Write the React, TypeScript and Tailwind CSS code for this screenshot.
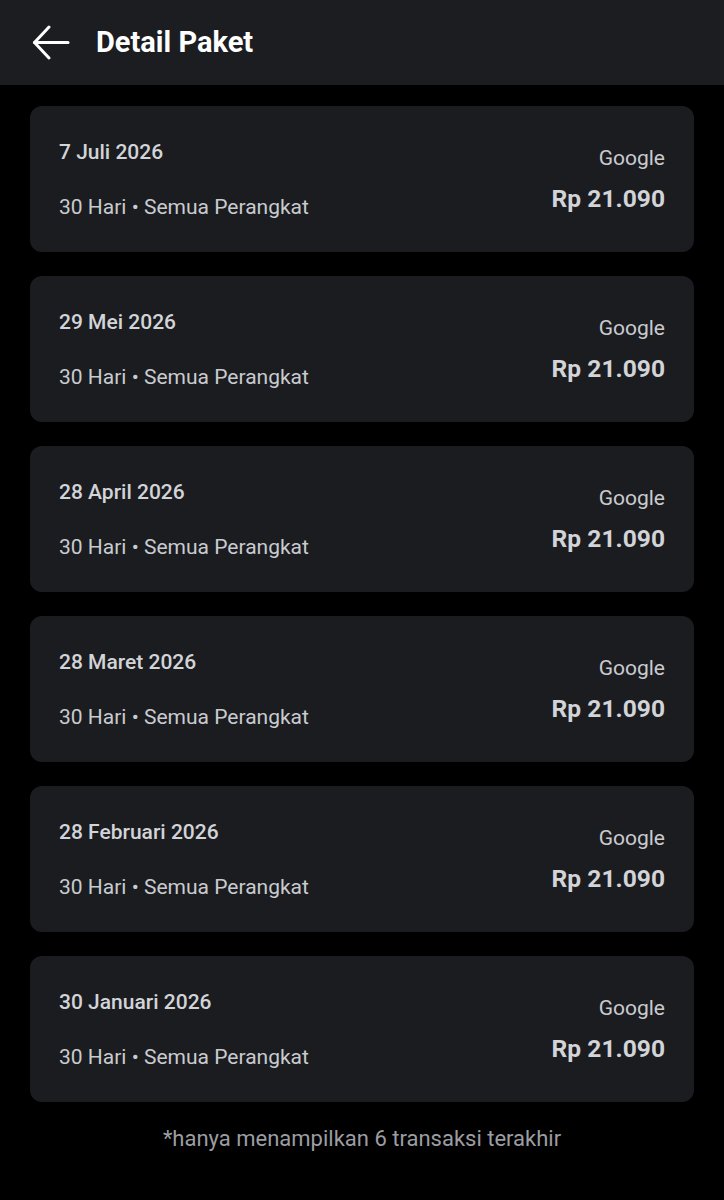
const transactions = [
  "7 Juli 2026",
  "29 Mei 2026",
  "28 April 2026",
  "28 Maret 2026",
  "28 Februari 2026",
  "30 Januari 2026",
];

function BackArrow() {
  return (
    <svg width="38" height="36" viewBox="0 0 38 36" fill="none" stroke="white" strokeWidth="3" strokeLinecap="round" strokeLinejoin="round">
      <path d="M2.5 17.5H36" />
      <path d="M17 2 2.5 17.5 17 33" />
    </svg>
  );
}

function PackageCard({ date }: { date: string }) {
  return (
    <div className="flex h-[146px] items-center justify-between rounded-xl bg-[#1b1c20] px-[29px]">
      <div className="flex flex-col gap-[31px]">
        <div className="text-[21px] font-medium leading-6 text-[#d2d4d8]">{date}</div>
        <div className="text-[21px] leading-6 text-[#c9cbcf]">30 Hari • Semua Perangkat</div>
      </div>
      <div className="flex flex-col items-end gap-[15px]">
        <div className="text-[21px] leading-6 text-[#c9cbcf]">Google</div>
        <div className="text-[24.6px] font-bold leading-7 text-[#d2d4d8]">Rp 21.090</div>
      </div>
    </div>
  );
}

export default function App() {
  return (
    <div className="min-h-[1200px] bg-black font-['Roboto',sans-serif]">
      <div className="flex h-[85px] items-center bg-[#1c1d21] pl-[32px]">
        <BackArrow />
        <div className="ml-[26px] text-[29px] font-bold text-white">Detail Paket</div>
      </div>
      <div className="flex flex-col gap-6 px-[30px] pt-[21px]">
        {transactions.map((d) => (
          <PackageCard key={d} date={d} />
        ))}
      </div>
      <div className="pt-[25px] text-center text-[22px] leading-6 text-[#9c9da2]">
        *hanya menampilkan 6 transaksi terakhir
      </div>
    </div>
  );
}
